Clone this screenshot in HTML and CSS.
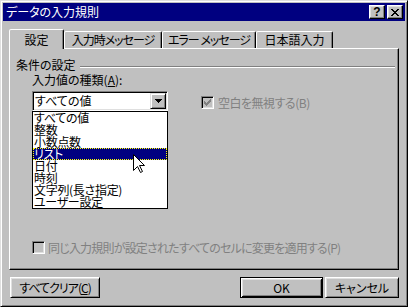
FILE: index.html
```html
<!DOCTYPE html>
<html lang="ja">
<head>
<meta charset="utf-8">
<title>データの入力規則</title>
<link rel="stylesheet" href="styles.css">
</head>
<body>
<div class="window">
  <div class="titlebar">
    <span class="title">データの入力規則</span>
    <div class="caption-btns">
      <span class="cbtn help">?</span>
      <span class="cbtn close"><svg width="8" height="7" viewBox="0 0 8 7"><path d="M0 0h2v1h-2zM6 0h2v1h-2zM1 1h2v1h-2zM5 1h2v1h-2zM2 2h4v1h-4zM3 3h2v1h-2zM2 4h4v1h-4zM1 5h2v1h-2zM5 5h2v1h-2zM0 6h2v1h-2zM6 6h2v1h-2z" fill="#000"/></svg></span>
    </div>
  </div>
  <div class="client">
    <div class="tabs">
      <div class="tab active t1">設定</div>
      <div class="tab t2 tight">入力時メッセージ</div>
      <div class="tab t3 tight">エラー メッセージ</div>
      <div class="tab t4">日本語入力</div>
    </div>
    <div class="panel">
      <div class="section"><span>条件の設定</span><span class="rule"></span></div>
      <div class="indent field-label">入力値の種類(<u>A</u>):</div>
      <div class="indent combo-row">
        <div class="combo">
          <span class="combo-text">すべての値</span>
          <span class="combo-btn"><svg width="7" height="4" viewBox="0 0 7 4"><path d="M0 0h7v1h-7zM1 1h5v1h-5zM2 2h3v1h-3zM3 3h1v1h-1z" fill="#000"/></svg></span>
          <ul class="dropdown">
            <li>すべての値</li>
            <li>整数</li>
            <li>小数点数</li>
            <li class="sel">リスト</li>
            <li>日付</li>
            <li>時刻</li>
            <li>文字列(長さ指定)</li>
            <li>ユーザー設定</li>
          </ul>
        </div>
        <div class="check disabled ignore">
          <span class="cb"><svg width="13" height="13" viewBox="0 0 13 13"><path d="M9 3h1v1h-1zM8 4h2v1h-2zM3 5h1v1h-1zM7 5h3v1h-3zM3 6h2v1h-2zM6 6h3v1h-3zM3 7h5v1h-5zM4 8h3v1h-3zM5 9h1v1h-1z" fill="#808080"/></svg></span>
          <span class="ignore-text">空白を無視する(B)</span>
        </div>
      </div>
      <div class="indent check disabled apply">
        <span class="cb"></span>
        <span class="apply-text">同じ入力規則が設定されたすべてのセルに変更を適用する(P)</span>
      </div>
    </div>
    <div class="buttons">
      <button class="btn clear tight">すべてクリア(<u>C</u>)</button>
      <span class="spacer"></span>
      <button class="btn default ok">OK</button>
      <button class="btn cancel">キャンセル</button>
    </div>
  </div>
  <svg class="cursor" width="13" height="20" viewBox="0 0 13 20"><path d="M0.5 0.5V16.5L4.5 12.5L7.5 18.5L9.5 17.5L6.5 11.5H11.5Z" fill="#fff" stroke="#000" stroke-width="1" stroke-linejoin="miter"/></svg>
</div>
</body>
</html>
```
FILE: styles.css
```css
* { box-sizing: border-box; }
html, body { margin: 0; padding: 0; }
body {
  width: 408px;
  height: 307px;
  overflow: hidden;
  font-family: "Noto Sans CJK JP", "Noto Sans", sans-serif;
  font-size: 12px;
  line-height: 12px;
  color: #000;
  font-feature-settings: "palt";
}
.window {
  position: relative;
  width: 408px;
  height: 307px;
  background: #c0c0c0;
  border: 1px solid;
  border-color: #dfdfdf #000 #000 #dfdfdf;
  box-shadow: inset 1px 1px #fff, inset -1px -1px #808080;
  padding: 2px;
  display: flex;
  flex-direction: column;
}
.titlebar {
  height: 18px;
  flex: none;
  background: #000080;
  color: #fff;
  display: flex;
  align-items: center;
  padding: 0 2px 0 2px;
}
.title { flex: 1; padding-left: 1px; white-space: nowrap; }
.caption-btns { display: flex; gap: 2px; }
.cbtn {
  width: 16px;
  height: 14px;
  background: #c0c0c0;
  border: 1px solid;
  border-color: #fff #000 #000 #fff;
  box-shadow: inset -1px -1px #808080, inset 1px 1px #dfdfdf;
  display: flex;
  align-items: center;
  justify-content: center;
  color: #000;
}
.cbtn.help {
  font-family: "Liberation Sans", sans-serif;
  font-weight: bold;
  font-size: 12px;
  line-height: 12px;
}
.client {
  flex: 1;
  display: flex;
  flex-direction: column;
  padding: 8px 6px 0;
}
.tabs {
  display: flex;
  align-items: flex-end;
  height: 20px;
  margin-bottom: -1px;
  position: relative;
  z-index: 1;
}
.tab {
  height: 17px;
  margin-bottom: 1px;
  border: 1px solid;
  border-bottom: 0;
  border-color: #fff #000 transparent #fff;
  box-shadow: inset -1px 0 #808080;
  border-radius: 2px 2px 0 0;
  padding-top: 2px;
  text-align: center;
  white-space: nowrap;
  background: #c0c0c0;
}
.tab.active { height: 20px; margin-bottom: 0; padding-top: 4px; }
.tight { letter-spacing: -1px; }
.t1 { width: 55px; }
.t2 { width: 98px; }
.t3 { width: 94px; }
.t4 { width: 77px; }
.panel {
  position: relative;
  height: 222px;
  flex: none;
  background: #c0c0c0;
  border: 1px solid;
  border-color: #fff #000 #000 #fff;
  box-shadow: inset -1px -1px #808080;
  display: flex;
  flex-direction: column;
  padding: 10px 3px 15px 6px;
}
.section { display: flex; align-items: flex-start; gap: 4px; }
.rule {
  flex: 1;
  height: 2px;
  margin-top: 7px;
  border-top: 1px solid #808080;
  border-bottom: 1px solid #fff;
}
.indent { margin-left: 16px; }
.field-label { margin-top: 3px; }
.combo-row { display: flex; align-items: flex-start; margin-top: 5px; }
.combo {
  position: relative;
  width: 136px;
  height: 20px;
  background: #fff;
  border: 1px solid;
  border-color: #808080 #fff #fff #808080;
  box-shadow: inset 1px 1px #000, inset -1px -1px #dfdfdf;
  display: flex;
  align-items: center;
  padding: 1px;
}
.combo-text { flex: 1; padding-left: 1px; white-space: nowrap; }
.combo-btn {
  width: 16px;
  height: 16px;
  background: #c0c0c0;
  border: 1px solid;
  border-color: #dfdfdf #000 #000 #dfdfdf;
  box-shadow: inset 1px 1px #fff, inset -1px -1px #808080;
  display: flex;
  align-items: center;
  justify-content: center;
}
.dropdown {
  position: absolute;
  left: -1px;
  top: 19px;
  width: 136px;
  margin: 0;
  padding: 0;
  list-style: none;
  background: #fff;
  border: 1px solid #000;
  z-index: 5;
}
.dropdown li { height: 12px; line-height: 12px; padding-left: 1px; white-space: nowrap; letter-spacing: -0.3px; }
.dropdown li.sel {
  background: #000080;
  color: #fff;
  outline: 1px dotted #ffff00;
  outline-offset: -1px;
}
.check { display: flex; align-items: center; gap: 4px; white-space: nowrap; }
.check.disabled { color: #808080; }
.ignore { margin-left: 33px; margin-top: 5px; }
.ignore-text { letter-spacing: -0.5px; }
.apply { margin-top: auto; gap: 3px; }
.apply-text { letter-spacing: -0.8px; }
.cb {
  position: relative;
  width: 13px;
  height: 13px;
  flex: none;
  background: #c0c0c0;
  border: 1px solid;
  border-color: #808080 #fff #fff #808080;
  box-shadow: inset 1px 1px #000, inset -1px -1px #dfdfdf;
}
.cb svg { position: absolute; left: -1px; top: -1px; }
.buttons { display: flex; margin-top: 7px; padding-left: 1px; }
.spacer { flex: 1; }
.btn {
  appearance: none;
  height: 21px;
  margin: 0;
  padding: 0;
  font: inherit;
  color: #000;
  background: #c0c0c0;
  border: 1px solid;
  border-color: #fff #000 #000 #fff;
  box-shadow: inset 1px 1px #dfdfdf, inset -1px -1px #808080;
  display: flex;
  align-items: center;
  justify-content: center;
  white-space: nowrap;
}
.btn.default {
  border-color: #000;
  box-shadow: inset 1px 1px #fff, inset -1px -1px #000, inset 2px 2px #dfdfdf, inset -2px -2px #808080;
}
.clear { width: 90px; }
.ok { width: 83px; margin-right: 2px; }
.cancel { width: 74px; }
.cursor { position: absolute; left: 132px; top: 153px; z-index: 10; }
```
